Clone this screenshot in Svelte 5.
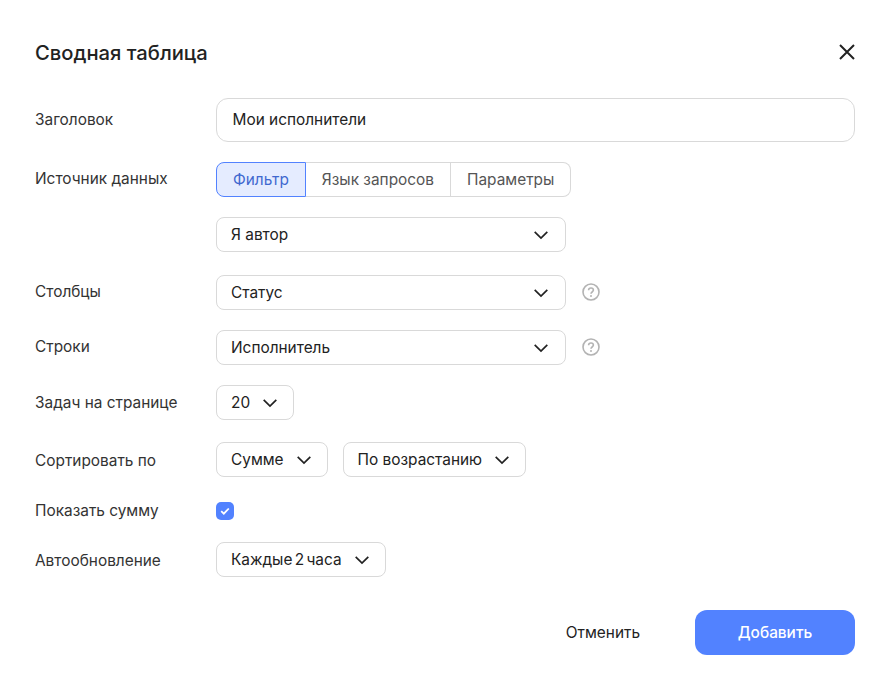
<script>
	const sources = ['Фильтр', 'Язык запросов', 'Параметры'];
	let active = $state('Фильтр');
	let showSum = $state(true);
</script>

{#snippet chevron()}
	<svg class="chevron" width="16" height="16" viewBox="0 0 16 16" fill="none">
		<path d="M1.7 4.8 8 11l6.3-6.2" stroke="#222" stroke-width="1.7" />
	</svg>
{/snippet}

{#snippet hint()}
	<svg class="hint" width="18" height="18" viewBox="0 0 18 18" fill="none">
		<circle cx="9" cy="9" r="8" stroke="#b3b3b3" stroke-width="1.6" />
		<path d="M6.6 7.2c0-1.4 1-2.2 2.4-2.2s2.4.8 2.4 2.1c0 1.9-2.4 1.9-2.4 3.6" stroke="#b3b3b3" stroke-width="1.6" />
		<circle cx="9" cy="13" r="1" fill="#b3b3b3" />
	</svg>
{/snippet}

{#snippet select(label, cls)}
	<button class="select {cls}">
		<span>{label}</span>
		{@render chevron()}
	</button>
{/snippet}

<div class="dialog">
	<header>
		<h2>Сводная таблица</h2>
		<button class="close" aria-label="Закрыть">
			<svg width="18" height="18" viewBox="0 0 18 18" fill="none">
				<path d="M2 2l14 14M16 2 2 16" stroke="#222" stroke-width="2" />
			</svg>
		</button>
	</header>

	<div class="row title-row">
		<div class="label">Заголовок</div>
		<input class="text-input" value="Мои исполнители" />
	</div>

	<div class="row source-row">
		<div class="label">Источник данных</div>
		<div class="stack">
			<div class="tabs">
				{#each sources as s}
					<button class="tab" class:active={active === s} onclick={() => (active = s)}>{s}</button>
				{/each}
			</div>
			{@render select('Я автор', 'wide')}
		</div>
	</div>

	<div class="row columns-row">
		<div class="label">Столбцы</div>
		{@render select('Статус', 'wide')}
		{@render hint()}
	</div>

	<div class="row rows-row">
		<div class="label">Строки</div>
		{@render select('Исполнитель', 'wide')}
		{@render hint()}
	</div>

	<div class="row per-page-row">
		<div class="label">Задач на странице</div>
		{@render select('20', '')}
	</div>

	<div class="row sort-row">
		<div class="label">Сортировать по</div>
		<div class="pair">
			{@render select('Сумме', '')}
			{@render select('По возрастанию', '')}
		</div>
	</div>

	<div class="row sum-row">
		<div class="label">Показать сумму</div>
		<button class="checkbox" class:off={!showSum} aria-label="Показать сумму" onclick={() => (showSum = !showSum)}>
			<svg width="18" height="18" viewBox="0 0 18 18" fill="none">
				<path d="M5.2 9.2l2.6 2.5 5-5.2" stroke="#fff" stroke-width="1.8" />
			</svg>
		</button>
	</div>

	<div class="row refresh-row">
		<div class="label">Автообновление</div>
		{@render select('Каждые 2 часа', 'tight')}
	</div>

	<footer>
		<button class="cancel">Отменить</button>
		<button class="submit">Добавить</button>
	</footer>
</div>

<style>
	:global(body) {
		background: #fff;
	}

	.dialog {
		box-sizing: border-box;
		width: 890px;
		height: 688px;
		padding: 0 35px;
		font-family: Inter, "Noto Sans", sans-serif;
		font-size: 15.4px;
		color: #222;
	}

	button {
		font: inherit;
		color: inherit;
		background: none;
		border: none;
		padding: 0;
		cursor: pointer;
	}

	header {
		display: flex;
		align-items: center;
		justify-content: space-between;
		height: 98px;
		padding-top: 6px;
		box-sizing: border-box;
	}

	h2 {
		margin: 0;
		font-size: 20.2px;
		font-weight: 500;
	}

	.close {
		display: flex;
		margin-right: -1px;
	}

	.row {
		display: grid;
		grid-template-columns: 181px auto auto 1fr;
		align-items: center;
		justify-items: start;
		margin-bottom: 20px;
	}

	.title-row {
		grid-template-columns: 181px 1fr;
		height: 44px;
	}

	.title-row .label {
		padding-bottom: 2px;
	}

	.columns-row .label,
	.rows-row .label {
		padding-bottom: 3px;
	}

	.sort-row .label,
	.refresh-row .label {
		padding-top: 2px;
	}

	.sum-row .label {
		padding-bottom: 2px;
	}

	.source-row {
		align-items: start;
		margin-bottom: 23px;
	}

	.source-row .label {
		line-height: 34px;
	}

	.per-page-row {
		margin-bottom: 22px;
	}

	.sort-row {
		margin-bottom: 25px;
	}

	.sum-row {
		grid-template-rows: 18px;
		margin-bottom: 22px;
	}

	.refresh-row {
		margin-bottom: 33px;
	}

	.label {
		color: #333;
		white-space: nowrap;
	}

	.text-input {
		box-sizing: border-box;
		width: 100%;
		height: 44px;
		padding: 0 15.5px 2px;
		border: 1px solid #d9d9d9;
		border-radius: 12px;
		outline: none;
		font: inherit;
		color: inherit;
	}

	.stack {
		display: flex;
		flex-direction: column;
		gap: 20px;
	}

	.tabs {
		display: flex;
		height: 35px;
	}

	.tab {
		box-sizing: border-box;
		height: 35px;
		padding: 0 16px;
		border: 1px solid #d9d9d9;
		border-left: none;
		color: #555;
		white-space: nowrap;
	}

	.tab:first-child {
		border-radius: 8px 0 0 8px;
		border-left: 1px solid #d9d9d9;
	}

	.tab:last-child {
		border-radius: 0 8px 8px 0;
	}

	.tab.active {
		background: #e5ecff;
		border: 1px solid #5282ff;
		color: #3f68cf;
	}

	.select {
		box-sizing: border-box;
		display: flex;
		align-items: center;
		justify-content: space-between;
		gap: 12px;
		height: 35px;
		padding: 0 15px 0 14px;
		border: 1px solid #d9d9d9;
		border-radius: 8px;
		white-space: nowrap;
	}

	.select.wide {
		width: 350px;
		padding-right: 16px;
	}

	.select.tight {
		word-spacing: -2px;
	}

	.select span {
		padding-bottom: 1px;
	}

	.chevron {
		flex: none;
	}

	.hint {
		margin-left: 16px;
		margin-bottom: 1px;
	}

	.pair {
		display: flex;
		gap: 15px;
	}

	.checkbox {
		display: flex;
		width: 18px;
		height: 18px;
		border-radius: 5px;
		background: #5282ff;
	}

	.checkbox.off {
		background: #fff;
		box-shadow: inset 0 0 0 1px #d9d9d9;
	}

	footer {
		display: flex;
		justify-content: flex-end;
		align-items: center;
		gap: 55px;
	}

	.submit {
		width: 160px;
		height: 45px;
		border-radius: 12px;
		background: #5282ff;
		color: #fff;
		font-weight: 500;
	}
</style>
